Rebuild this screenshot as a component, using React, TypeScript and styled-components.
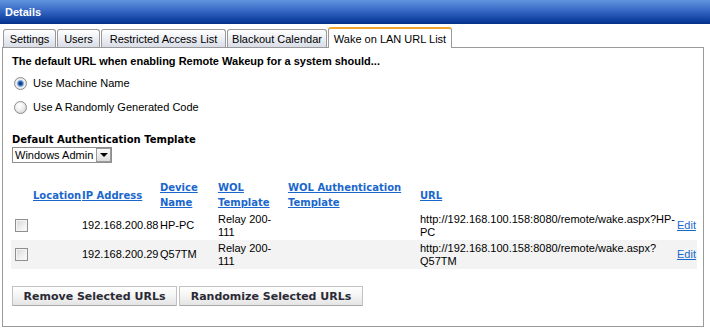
import * as React from "react";
import styled, { createGlobalStyle } from "styled-components";

const GlobalStyle = createGlobalStyle`
    html, body {
        margin: 0;
        padding: 0;
        background: #ffffff;
    }
    body {
        font-family: "Liberation Sans", Arial, sans-serif;
        font-size: 11px;
        color: #000000;
    }
`;

const Page = styled.div`
    width: 710px;
    height: 333px;
    overflow: hidden;
    background: #ffffff;
`;

const TitleBar = styled.div`
    height: 24px;
    display: flex;
    align-items: center;
    padding-left: 5px;
    background: linear-gradient(to bottom, #6194dd 0%, #3a6cc8 40%, #0f409f 85%, #063089 100%);
    color: #ffffff;
    font: bold 11px "Liberation Sans", Arial, sans-serif;
`;

const TabStrip = styled.div`
    display: flex;
    align-items: flex-end;
    gap: 1px;
    height: 20px;
    margin-top: 3px;
    padding-left: 3px;
`;

const Tab = styled.div<{ $active?: boolean; $width: number }>`
    box-sizing: border-box;
    width: ${(p) => p.$width}px;
    height: ${(p) => (p.$active ? 21 : 18)}px;
    margin-bottom: ${(p) => (p.$active ? -1 : 0)}px;
    display: flex;
    align-items: center;
    justify-content: center;
    position: relative;
    z-index: ${(p) => (p.$active ? 1 : 0)};
    border: 1px solid #9a9a9a;
    border-top: ${(p) => (p.$active ? "2px solid #f2a630" : "1px solid #9a9a9a")};
    border-bottom: none;
    border-radius: 3px 3px 0 0;
    background: ${(p) => (p.$active ? "#ffffff" : "linear-gradient(to bottom, #ffffff 0%, #eef0f5 45%, #d9dde7 100%)")};
    font-size: 11px;
    white-space: nowrap;
`;

const Panel = styled.div`
    box-sizing: border-box;
    width: 702px;
    height: 280px;
    margin-left: 2px;
    border: 1px solid #9a9a9a;
    padding: 7px 9px 0 9px;
    display: flex;
    flex-direction: column;
    align-items: flex-start;
`;

const Question = styled.div`
    font-weight: bold;
    line-height: 13px;
`;

const RadioList = styled.div`
    margin-top: 3px;
`;

const RadioRow = styled.label`
    display: flex;
    align-items: center;
    gap: 6px;
    height: 24px;
    padding-left: 2px;
`;

const Radio = styled.input`
    appearance: none;
    margin: 0;
    width: 13px;
    height: 13px;
    border-radius: 50%;
    border: 1px solid #8c8c8c;
    box-sizing: border-box;
    background: radial-gradient(circle at 40% 35%, #ffffff 0%, #f1f1f1 40%, #c9c9c9 100%);

    &:checked {
        background: radial-gradient(circle at 50% 50%, #0d2a5a 0px, #1c4f9e 1.5px, #4f86cf 2.5px, #b8cfe9 3.5px, #f4f4f4 4.2px, #c9c9c9 100%);
    }
`;

const FieldLabel = styled.div`
    margin-top: 15px;
    font: bold 10px "DejaVu Sans", sans-serif;
    line-height: 12px;
`;

const SelectBox = styled.div`
    margin-top: 1px;
    box-sizing: border-box;
    width: 100px;
    height: 16px;
    display: flex;
    align-items: stretch;
    border: 1px solid #8e8e8e;
    background: #ffffff;
`;

const SelectText = styled.span`
    flex: 1;
    padding-left: 2px;
    line-height: 14px;
`;

const SelectButton = styled.span`
    box-sizing: border-box;
    width: 15px;
    display: flex;
    align-items: center;
    justify-content: center;
    border: 1px solid #9b9b9b;
    background: linear-gradient(to bottom, #fafafa, #dcdcdc);
`;

const Arrow = styled.span`
    width: 0;
    height: 0;
    border-left: 4px solid transparent;
    border-right: 4px solid transparent;
    border-top: 4px solid #000000;
`;

const Table = styled.table`
    margin-top: 16px;
    margin-left: -1px;
    width: 686px;
    table-layout: fixed;
    border-collapse: collapse;
`;

const HeadCell = styled.th`
    height: 32px;
    padding: 0 0 0 2px;
    vertical-align: middle;
    text-align: left;
    font: bold 10px "DejaVu Sans", sans-serif;
    line-height: 15px;
`;

const Row = styled.tr<{ $alt?: boolean }>`
    background: ${(p) => (p.$alt ? "#f3f3f3" : "transparent")};
`;

const Cell = styled.td<{ $flush?: boolean }>`
    height: 29px;
    padding: 0 0 0 ${(p) => (p.$flush ? 0 : 2)}px;
    vertical-align: middle;
    line-height: 13px;
    overflow: visible;
`;

const SortLink = styled.a`
    color: #1a67cc;
    text-decoration: underline;
    cursor: pointer;
`;

const EditLink = styled.a`
    color: #1a67cc;
    text-decoration: underline;
    cursor: pointer;
`;

const Check = styled.input`
    appearance: none;
    display: block;
    margin: 0 0 0 2px;
    width: 13px;
    height: 13px;
    box-sizing: border-box;
    border: 1px solid #8f8f8f;
    background: linear-gradient(135deg, #d6d6d6 0%, #ececec 50%, #ffffff 100%);
    box-shadow: inset 0 0 0 1px #f4f4f4;
`;

const ButtonRow = styled.div`
    display: flex;
    gap: 2px;
    margin-top: 17px;
`;

const Button = styled.button<{ $width: number }>`
    box-sizing: border-box;
    width: ${(p) => p.$width}px;
    height: 20px;
    padding: 0;
    border: 1px solid #c2c2c2;
    border-bottom-color: #a8a8a8;
    border-radius: 1px;
    background: linear-gradient(to bottom, #ffffff 0%, #f4f4f4 50%, #e4e4e4 100%);
    color: #2b2b36;
    font: bold 11px "DejaVu Sans", sans-serif;
    white-space: nowrap;
`;

const tabs = [
    { label: "Settings", width: 53 },
    { label: "Users", width: 43 },
    { label: "Restricted Access List", width: 125 },
    { label: "Blackout Calendar", width: 100 },
    { label: "Wake on LAN URL List", width: 124, active: true },
];

const columns = [20, 49, 78, 58, 70, 132, 259, 20];

const urls = [
    { ip: "192.168.200.88", device: "HP-PC", template: "Relay 200-111", url: "http://192.168.100.158:8080/remote/wake.aspx?HP-PC" },
    { ip: "192.168.200.29", device: "Q57TM", template: "Relay 200-111", url: "http://192.168.100.158:8080/remote/wake.aspx?Q57TM" },
];

export default function App() {
    return (
        <>
            <GlobalStyle />
            <Page>
                <TitleBar>Details</TitleBar>
                <TabStrip>
                    {tabs.map((t) => (
                        <Tab key={t.label} $width={t.width} $active={t.active}>
                            {t.label}
                        </Tab>
                    ))}
                </TabStrip>
                <Panel>
                    <Question>The default URL when enabling Remote Wakeup for a system should...</Question>
                    <RadioList>
                        <RadioRow>
                            <Radio type="radio" name="urlmode" defaultChecked />
                            Use Machine Name
                        </RadioRow>
                        <RadioRow>
                            <Radio type="radio" name="urlmode" />
                            Use A Randomly Generated Code
                        </RadioRow>
                    </RadioList>
                    <FieldLabel>Default Authentication Template</FieldLabel>
                    <SelectBox>
                        <SelectText>Windows Admin</SelectText>
                        <SelectButton>
                            <Arrow />
                        </SelectButton>
                    </SelectBox>
                    <Table>
                        <colgroup>
                            {columns.map((w, i) => (
                                <col key={i} style={{ width: w }} />
                            ))}
                        </colgroup>
                        <thead>
                            <tr>
                                <HeadCell />
                                <HeadCell><SortLink>Location</SortLink></HeadCell>
                                <HeadCell><SortLink>IP Address</SortLink></HeadCell>
                                <HeadCell><SortLink>Device Name</SortLink></HeadCell>
                                <HeadCell><SortLink>WOL Template</SortLink></HeadCell>
                                <HeadCell><SortLink>WOL Authentication Template</SortLink></HeadCell>
                                <HeadCell><SortLink>URL</SortLink></HeadCell>
                                <HeadCell />
                            </tr>
                        </thead>
                        <tbody>
                            {urls.map((u, i) => (
                                <Row key={u.ip} $alt={i % 2 === 1}>
                                    <Cell><Check type="checkbox" /></Cell>
                                    <Cell />
                                    <Cell>{u.ip}</Cell>
                                    <Cell>{u.device}</Cell>
                                    <Cell>{u.template}</Cell>
                                    <Cell />
                                    <Cell>{u.url}</Cell>
                                    <Cell $flush><EditLink>Edit</EditLink></Cell>
                                </Row>
                            ))}
                        </tbody>
                    </Table>
                    <ButtonRow>
                        <Button $width={165}>Remove Selected URLs</Button>
                        <Button $width={184}>Randomize Selected URLs</Button>
                    </ButtonRow>
                </Panel>
            </Page>
        </>
    );
}
